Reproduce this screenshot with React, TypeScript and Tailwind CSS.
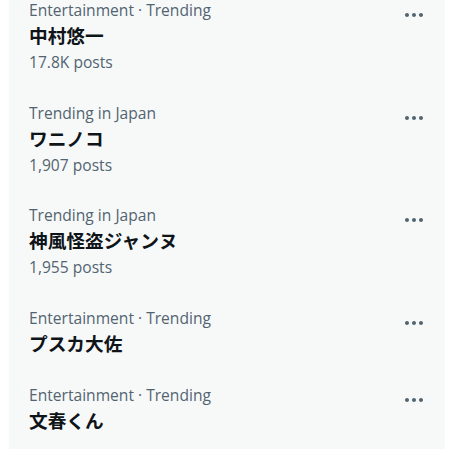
import React from "react"

type Trend = { category: string; title: string; posts?: string }

const trends: Trend[] = [
  { category: "Entertainment · Trending", title: "中村悠一", posts: "17.8K posts" },
  { category: "Trending in Japan", title: "ワニノコ", posts: "1,907 posts" },
  { category: "Trending in Japan", title: "神風怪盗ジャンヌ", posts: "1,955 posts" },
  { category: "Entertainment · Trending", title: "プスカ大佐" },
  { category: "Entertainment · Trending", title: "文春くん" },
]

const latin = { fontFamily: '"Open Sans", "Noto Sans CJK JP", sans-serif' }
const cjk = { fontFamily: '"Noto Sans CJK JP", "Noto Sans", sans-serif' }

function MoreIcon() {
  return (
    <svg viewBox="0 0 24 24" className="h-6 w-6 fill-[#536471]">
      <path d="M3 12c0-1.1.9-2 2-2s2 .9 2 2-.9 2-2 2-2-.9-2-2zm9 2c1.1 0 2-.9 2-2s-.9-2-2-2-2 .9-2 2 .9 2 2 2zm7 0c1.1 0 2-.9 2-2s-.9-2-2-2-2 .9-2 2 .9 2 2 2z" />
    </svg>
  )
}

function TrendRow({ trend }: { trend: Trend }) {
  return (
    <div className="relative px-[20px] pt-[14px] pb-[16.5px]">
      <div className="text-[15.6px] leading-[20px] text-[#536471]" style={latin}>
        {trend.category}
      </div>
      <div className="pt-[3px] text-[18.7px] leading-[24px] font-bold text-[#0f1419]" style={cjk}>
        {trend.title}
      </div>
      {trend.posts && (
        <div className="pt-[5px] text-[15.6px] leading-[20px] text-[#536471]" style={latin}>
          {trend.posts}
        </div>
      )}
      <div className="absolute right-[19px] top-[17px]">
        <MoreIcon />
      </div>
    </div>
  )
}

export default function App() {
  return (
    <div className="h-[449px] w-[453px] overflow-hidden bg-white">
      <div className="ml-[9px] mt-[-14px] w-[436px] bg-[#f7f9f9]">
        {trends.map((t, i) => (
          <TrendRow key={i} trend={t} />
        ))}
      </div>
    </div>
  )
}
